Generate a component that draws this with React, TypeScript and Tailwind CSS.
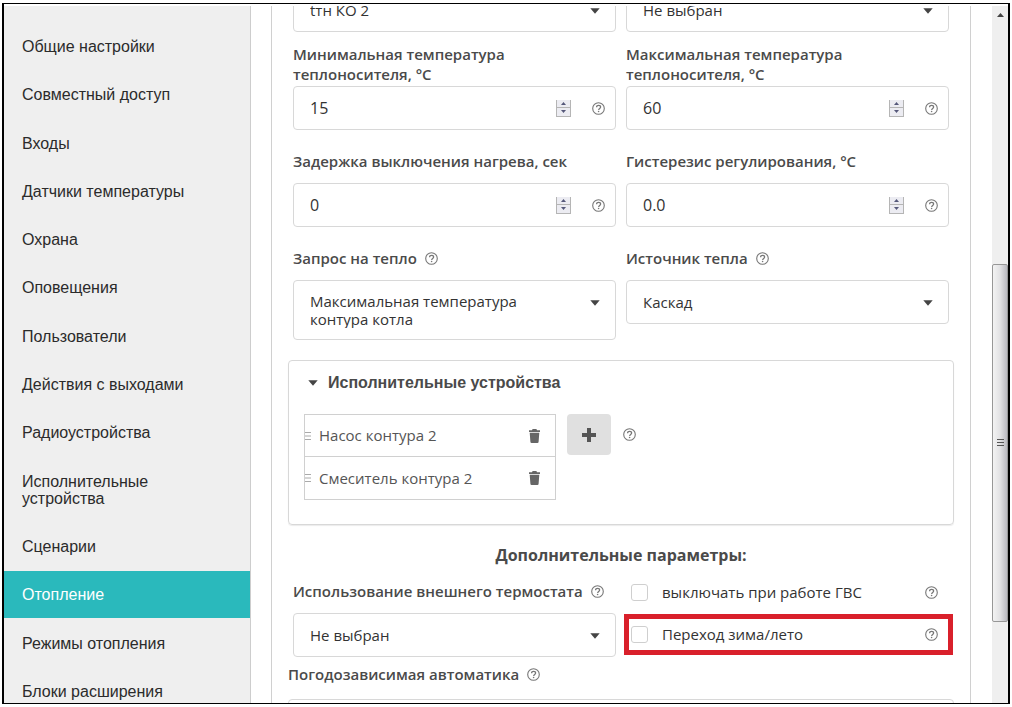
import { useId, useState } from 'react'

const menu = [
  'Общие настройки',
  'Совместный доступ',
  'Входы',
  'Датчики температуры',
  'Охрана',
  'Оповещения',
  'Пользователи',
  'Действия с выходами',
  'Радиоустройства',
  'Исполнительные устройства',
  'Сценарии',
  'Отопление',
  'Режимы отопления',
  'Блоки расширения',
]

function Help() {
  return (
    <button type="button" aria-label="Справка" className="block shrink-0 text-[#777]">
      <svg width="13" height="13" viewBox="0 0 13 13" fill="none" stroke="currentColor">
        <circle cx="6.5" cy="6.5" r="5.8" strokeWidth="1.1" />
        <path d="M4.6 5.2C4.6 4 5.4 3.3 6.6 3.3s2 .7 2 1.7c0 1.4-1.9 1.5-1.9 2.9" strokeWidth="1.3" />
        <circle cx="6.6" cy="9.5" r=".8" fill="currentColor" stroke="none" />
      </svg>
    </button>
  )
}

function Caret() {
  return (
    <svg width="10" height="6" viewBox="0 0 10 6" fill="#444" className="shrink-0">
      <path d="M0.3 0.3h9.4L5 5.7z" />
    </svg>
  )
}

function Trash() {
  return (
    <svg width="11" height="14" viewBox="0 0 11 14" fill="#666">
      <path d="M3.6 0h3.8l.6 1.2H11v1.9H0V1.2h3z" />
      <path d="M.7 3.8h9.6l-.7 9a1.2 1.2 0 0 1-1.2 1.2H2.6a1.2 1.2 0 0 1-1.2-1.2z" />
    </svg>
  )
}

type LabelProps = { id: string; text: string; help?: boolean; gap?: string }

function FieldLabel({ id, text, help, gap = 'mb-3' }: LabelProps) {
  return (
    <div className={`flex items-center gap-2 ${gap}`}>
      <label htmlFor={id} className="max-w-[290px] text-[15px] leading-5 font-semibold text-[#4a4a4a]">
        {text}
      </label>
      {help && <Help />}
    </div>
  )
}

function SelectBox({ id, value, label, tall }: { id?: string; value: string; label?: string; tall?: boolean }) {
  return (
    <div className="relative">
      <select
        id={id}
        aria-label={label}
        className={`block w-full appearance-none whitespace-normal rounded border border-[#d8d8d8] bg-white pr-14 pl-4 text-[15px] text-[#333] ${
          tall ? 'h-[60px] leading-[18px]' : 'h-11 leading-5'
        }`}
      >
        <option>{value}</option>
      </select>
      <span className="pointer-events-none absolute top-5 right-4">
        <Caret />
      </span>
    </div>
  )
}

function NumberBox({ id, initial, step = 1 }: { id: string; initial: string; step?: number }) {
  const [value, setValue] = useState(initial)
  const digits = step < 1 ? 1 : 0
  const change = (d: number) => setValue((Number(value) + d).toFixed(digits))

  return (
    <div className="flex h-11 items-center rounded border border-[#d8d8d8] bg-white pr-[10px] pl-4">
      <input
        id={id}
        type="number"
        step={step}
        value={value}
        onChange={(e) => setValue(e.target.value)}
        className="min-w-0 flex-1 appearance-none text-base text-[#333] outline-none [-moz-appearance:textfield] [&::-webkit-inner-spin-button]:appearance-none"
      />
      <div className="mr-[21px] flex w-[15px] flex-col border-x border-b border-[#b5b5b5] bg-[#ececf2]">
        <button type="button" aria-label="Больше" onClick={() => change(step)} className="flex h-2 items-center justify-center border-b border-[#b5b5b5]">
          <svg width="5" height="3" viewBox="0 0 5 3" fill="#55587a">
            <path d="M2.5 0L5 3H0z" />
          </svg>
        </button>
        <button type="button" aria-label="Меньше" onClick={() => change(-step)} className="flex h-2 items-center justify-center">
          <svg width="5" height="3" viewBox="0 0 5 3" fill="#55587a">
            <path d="M0 0h5L2.5 3z" />
          </svg>
        </button>
      </div>
      <Help />
    </div>
  )
}

function CheckRow({ text }: { text: string }) {
  const id = useId()
  return (
    <div className="flex flex-1 items-center pr-[11px] pl-[5px]">
      <input id={id} type="checkbox" className="mr-[14px] size-[17px] shrink-0 appearance-none rounded-[3px] border border-[#cfcfcf] bg-white checked:bg-[#2ab9bc]" />
      <label htmlFor={id} className="flex-1 text-[15px] leading-5 text-[#333]">
        {text}
      </label>
      <Help />
    </div>
  )
}

function Sidebar() {
  return (
    <nav className="-mb-3 flex w-[247px] shrink-0 flex-col border-r border-[#cdcdcd] bg-[#efefef] pt-[17px] font-['Liberation_Sans',Arial,sans-serif]">
      <ul className="flex flex-1 flex-col justify-between">
        {menu.map((item) => (
          <li key={item}>
            <a
              href="#"
              className={`block py-[15px] pr-12 pl-[18px] text-base leading-[17px] ${
                item === 'Отопление' ? 'bg-[#2ab9bc] text-white' : 'text-[#2b2b2b]'
              }`}
            >
              {item}
            </a>
          </li>
        ))}
      </ul>
    </nav>
  )
}

function Devices() {
  return (
    <section className="mt-5 rounded border border-[#d8d8d8] px-[15px] pt-3 pb-6 shadow-[0_1px_1px_rgba(0,0,0,0.08)]">
      <button type="button" className="flex items-center gap-[10px] pl-1 font-['Liberation_Sans',Arial,sans-serif] text-base leading-5 font-bold text-[#4a4a4a]">
        <Caret />
        Исполнительные устройства
      </button>
      <div className="mt-[21px] flex items-start">
        <ul className="w-[252px] divide-y divide-[#d0d0d0] border border-[#d0d0d0]">
          {['Насос контура 2', 'Смеситель контура 2'].map((name) => (
            <li key={name} className="flex h-[42px] items-center pr-[15px] text-[15px] text-[#555]">
              <svg width="6" height="10" viewBox="0 0 6 10" stroke="#aaa" className="mr-2">
                <path d="M0 1.5h6M0 5h6M0 8.5h6" />
              </svg>
              <span className="flex-1">{name}</span>
              <button type="button" aria-label={`Удалить ${name}`}>
                <Trash />
              </button>
            </li>
          ))}
        </ul>
        <button type="button" aria-label="Добавить" className="mr-3 ml-[11px] flex h-[41px] w-11 items-center justify-center rounded bg-[#e0e0e0]">
          <svg width="14" height="14" viewBox="0 0 14 14" stroke="#555" strokeWidth="4">
            <path d="M7 0v14M0 7h14" />
          </svg>
        </button>
        <div className="flex h-[41px] items-center">
          <Help />
        </div>
      </div>
    </section>
  )
}

function Scrollbar() {
  return (
    <div className="flex w-4 shrink-0 flex-col bg-[#efefef]">
      <div className="flex h-[18px] items-center justify-center">
        <svg width="7" height="4" viewBox="0 0 7 4" fill="#444">
          <path d="M3.5 0L7 4H0z" />
        </svg>
      </div>
      <div className="flex-[241]" />
      <div className="flex flex-[357] items-center justify-center rounded-xs border border-[#979797] bg-linear-to-r from-[#f3f3f3] via-[#e2e2e4] to-[#b9b9bf]">
        <svg width="7" height="8" viewBox="0 0 7 8" stroke="#555">
          <path d="M0 .5h7M0 3.5h7M0 6.5h7" />
        </svg>
      </div>
      <div className="flex-[81]" />
    </div>
  )
}

export default function App() {
  return (
    <div className="h-screen bg-white px-[2px] py-[3px] font-['Open_Sans','Noto_Sans',sans-serif]">
      <div className="flex h-full overflow-hidden border-x-2 border-y border-black pt-[2px]">
        <Sidebar />
        <main className="min-w-0 flex-1 overflow-hidden pr-[21px] pl-5">
          <div className="min-h-full border-x border-[#d0d0d0] px-4">
            <div className="-mt-[18px] grid grid-cols-2 gap-x-[10px] px-[5px]">
              <SelectBox label="Датчик" value="tтн КО 2" />
              <SelectBox label="Резервный датчик" value="Не выбран" />
            </div>

            <div className="mt-3 grid grid-cols-2 gap-x-[10px] gap-y-[21px] px-[5px]">
              <div>
                <FieldLabel id="min" text="Минимальная температура теплоносителя, °C" gap="mb-0.5" />
                <NumberBox id="min" initial="15" />
              </div>
              <div>
                <FieldLabel id="max" text="Максимальная температура теплоносителя, °C" gap="mb-0.5" />
                <NumberBox id="max" initial="60" />
              </div>
              <div>
                <FieldLabel id="delay" text="Задержка выключения нагрева, сек" />
                <NumberBox id="delay" initial="0" />
              </div>
              <div>
                <FieldLabel id="hyst" text="Гистерезис регулирования, °C" />
                <NumberBox id="hyst" initial="0.0" step={0.1} />
              </div>
              <div>
                <FieldLabel id="request" text="Запрос на тепло" help />
                <SelectBox id="request" value="Максимальная температура контура котла" tall />
              </div>
              <div>
                <FieldLabel id="source" text="Источник тепла" help />
                <SelectBox id="source" value="Каскад" />
              </div>
            </div>

            <Devices />

            <h2 className="mt-5 text-center text-base leading-5 font-bold text-[#4a4a4a]">
              Дополнительные параметры:
            </h2>

            <div className="mt-4 grid grid-cols-2 gap-x-[10px] px-[5px]">
              <div>
                <FieldLabel id="thermostat" text="Использование внешнего термостата" help />
                <SelectBox id="thermostat" value="Не выбран" />
              </div>
              <div className="flex flex-col">
                <div className="flex h-[22px]">
                  <CheckRow text="выключать при работе ГВС" />
                </div>
                {/* highlighted option */}
                <div className="relative mt-3 flex h-[38px]">
                  <CheckRow text="Переход зима/лето" />
                  <div className="pointer-events-none absolute -top-px -right-1 -bottom-0.5 -left-0.5 border-5 border-[#d9202b]" />
                </div>
              </div>
            </div>

            <div className="mt-[7px]">
              <FieldLabel id="weather" text="Погодозависимая автоматика" help gap="mb-[15px]" />
              <SelectBox id="weather" value="Не выбран" />
            </div>
          </div>
        </main>
        <Scrollbar />
      </div>
    </div>
  )
}
